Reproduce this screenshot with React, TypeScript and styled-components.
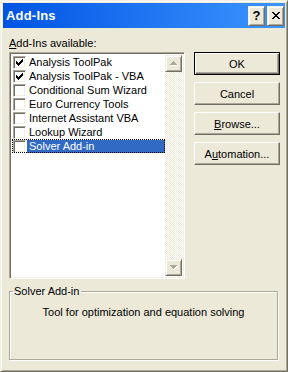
import styled, { createGlobalStyle } from 'styled-components'

const GlobalStyle = createGlobalStyle`
  html, body {
    margin: 0;
    padding: 0;
    background: #ece9d8;
  }
  body {
    font-family: 'Liberation Sans', Arial, sans-serif;
    font-size: 11px;
    color: #000;
  }
`

const Window = styled.div`
  box-sizing: border-box;
  width: 288px;
  height: 372px;
  background: #ece9d8;
  border: 1px solid;
  border-color: #f1efe2 #716f64 #716f64 #f1efe2;
  box-shadow: inset 1px 1px #fff, inset -1px -1px #aca899;
  padding: 2px;
  display: flex;
  flex-direction: column;
`

const TitleBar = styled.div`
  height: 25px;
  flex: none;
  display: flex;
  align-items: center;
  padding: 0 1px 0 3px;
  background: linear-gradient(to right, #0054e3, #3d95ff);
`

const Title = styled.span`
  flex: 1;
  color: #fff;
  font-weight: bold;
  font-size: 13px;
  letter-spacing: 0.2px;
`

const CaptionButton = styled.div`
  box-sizing: border-box;
  width: 17px;
  height: 20px;
  margin-left: 2px;
  background: #ece9d8;
  border: 1px solid;
  border-color: #f1efe2 #716f64 #716f64 #f1efe2;
  box-shadow: inset 1px 1px #fff, inset -1px -1px #aca899;
  display: flex;
  align-items: center;
  justify-content: center;
  font-weight: bold;
  font-size: 13px;
`

const Content = styled.div`
  flex: 1;
  display: flex;
  flex-direction: column;
  padding: 9px 5px 0 6px;
`

const TopRow = styled.div`
  display: flex;
  align-items: flex-start;
`

const ListColumn = styled.div`
  width: 176px;
  display: flex;
  flex-direction: column;
`

const Label = styled.div`
  height: 15px;
  line-height: 13px;
`

const ListBox = styled.div`
  box-sizing: border-box;
  height: 227px;
  background: #fff;
  border: 1px solid;
  border-color: #aca899 #fff #fff #aca899;
  box-shadow: inset 1px 1px #716f64, inset -1px -1px #f1efe2;
  padding: 2px 2px 2px 2px;
  display: flex;
`

const Items = styled.div`
  flex: 1;
  display: flex;
  flex-direction: column;
`

const Row = styled.div<{ $focused?: boolean }>`
  height: 14px;
  display: flex;
  align-items: center;
  padding-left: 1px;
  outline: ${p => (p.$focused ? '1px dotted #000' : 'none')};
  outline-offset: -1px;
`

const Check = styled.div`
  box-sizing: border-box;
  width: 13px;
  height: 13px;
  flex: none;
  background: #fff;
  border: 1px solid;
  border-color: #aca899 #fff #fff #aca899;
  box-shadow: inset 1px 1px #716f64, inset -1px -1px #f1efe2;
  display: flex;
  align-items: center;
  justify-content: center;
`

const ItemText = styled.div<{ $selected?: boolean }>`
  flex: 1;
  margin-left: 1px;
  padding-left: 2px;
  line-height: 13px;
  white-space: nowrap;
  background: ${p => (p.$selected ? '#316ac5' : 'transparent')};
  color: ${p => (p.$selected ? '#fff' : '#000')};
`

const ScrollBar = styled.div`
  width: 17px;
  flex: none;
  display: flex;
  flex-direction: column;
  background: repeating-conic-gradient(#ece9d8 0 25%, #fff 0 50%) 0 0 / 2px 2px;
`

const ScrollButton = styled.div`
  box-sizing: border-box;
  width: 17px;
  height: 17px;
  background: #ece9d8;
  border: 1px solid;
  border-color: #f1efe2 #716f64 #716f64 #f1efe2;
  box-shadow: inset 1px 1px #fff, inset -1px -1px #aca899;
  display: flex;
  align-items: center;
  justify-content: center;
`

const Track = styled.div`
  flex: 1;
`

const ButtonColumn = styled.div`
  margin-left: 9px;
  padding-top: 15px;
  display: flex;
  flex-direction: column;
  gap: 7px;
`

const Button = styled.div<{ $default?: boolean }>`
  box-sizing: border-box;
  width: 86px;
  height: 23px;
  background: #ece9d8;
  border: 1px solid;
  border-color: ${p => (p.$default ? '#000' : '#fff #716f64 #716f64 #fff')};
  box-shadow: ${p =>
    p.$default
      ? 'inset 1px 1px #fff, inset -1px -1px #716f64, inset -2px -2px #aca899'
      : 'inset -1px -1px #aca899'};
  display: flex;
  align-items: center;
  justify-content: center;
`

const GroupBox = styled.fieldset`
  box-sizing: border-box;
  width: 269px;
  height: 75px;
  margin: 6px 0 0 0;
  padding: 8px 0 0 0;
  border: 1px solid #aca899;
  box-shadow: inset 1px 1px #fff, 1px 1px #fff;
  text-align: center;
`

const Legend = styled.legend`
  margin-left: 3px;
  padding: 0 2px 0 1px;
  text-align: left;
  line-height: 13px;
`

const Description = styled.div`
  line-height: 13px;
`

const CheckMark = () => (
  <svg width="7" height="7" viewBox="0 0 7 7" shapeRendering="crispEdges">
    <path d="M0 2h1v3H0zM1 3h1v3H1zM2 4h1v3H2zM3 3h1v3H3zM4 2h1v3H4zM5 1h1v3H5zM6 0h1v3H6z" fill="#000" />
  </svg>
)

const Arrow = ({ down }: { down?: boolean }) => (
  <svg width="8" height="5" viewBox="0 0 8 5" shapeRendering="crispEdges">
    <path
      d={down ? 'M1 1h7v1H1zM2 2h5v1H2zM3 3h3v1H3zM4 4h1v1H4z' : 'M4 1h1v1H4zM3 2h3v1H3zM2 3h5v1H2zM1 4h7v1H1z'}
      fill="#fff"
    />
    <path
      d={down ? 'M0 0h7v1H0zM1 1h5v1H1zM2 2h3v1H2zM3 3h1v1H3z' : 'M3 0h1v1H3zM2 1h3v1H2zM1 2h5v1H1zM0 3h7v1H0z'}
      fill="#aca899"
    />
  </svg>
)

const CloseGlyph = () => (
  <svg width="8" height="7" viewBox="0 0 8 7" shapeRendering="crispEdges">
    <path
      d="M0 0h2v1H0zM6 0h2v1H6zM1 1h2v1H1zM5 1h2v1H5zM2 2h4v1H2zM3 3h2v1H3zM2 4h4v1H2zM1 5h2v1H1zM5 5h2v1H5zM0 6h2v1H0zM6 6h2v1H6z"
      fill="#000"
    />
  </svg>
)

const addIns = [
  { name: 'Analysis ToolPak', checked: true },
  { name: 'Analysis ToolPak - VBA', checked: true },
  { name: 'Conditional Sum Wizard', checked: false },
  { name: 'Euro Currency Tools', checked: false },
  { name: 'Internet Assistant VBA', checked: false },
  { name: 'Lookup Wizard', checked: false },
  { name: 'Solver Add-in', checked: false },
]

const selected = 'Solver Add-in'

const App = () => {
  return (
    <Window>
      <GlobalStyle />
      <TitleBar>
        <Title>Add-Ins</Title>
        <CaptionButton>?</CaptionButton>
        <CaptionButton>
          <CloseGlyph />
        </CaptionButton>
      </TitleBar>
      <Content>
        <TopRow>
          <ListColumn>
            <Label>
              <u>A</u>dd-Ins available:
            </Label>
            <ListBox>
              <Items>
                {addIns.map(item => (
                  <Row key={item.name} $focused={item.name === selected}>
                    <Check>{item.checked && <CheckMark />}</Check>
                    <ItemText $selected={item.name === selected}>{item.name}</ItemText>
                  </Row>
                ))}
              </Items>
              <ScrollBar>
                <ScrollButton>
                  <Arrow />
                </ScrollButton>
                <Track />
                <ScrollButton>
                  <Arrow down />
                </ScrollButton>
              </ScrollBar>
            </ListBox>
          </ListColumn>
          <ButtonColumn>
            <Button $default>OK</Button>
            <Button>Cancel</Button>
            <Button>
              <u>B</u>rowse...
            </Button>
            <Button>
              A<u>u</u>tomation...
            </Button>
          </ButtonColumn>
        </TopRow>
        <GroupBox>
          <Legend>Solver Add-in</Legend>
          <Description>Tool for optimization and equation solving</Description>
        </GroupBox>
      </Content>
    </Window>
  )
}

export default App
